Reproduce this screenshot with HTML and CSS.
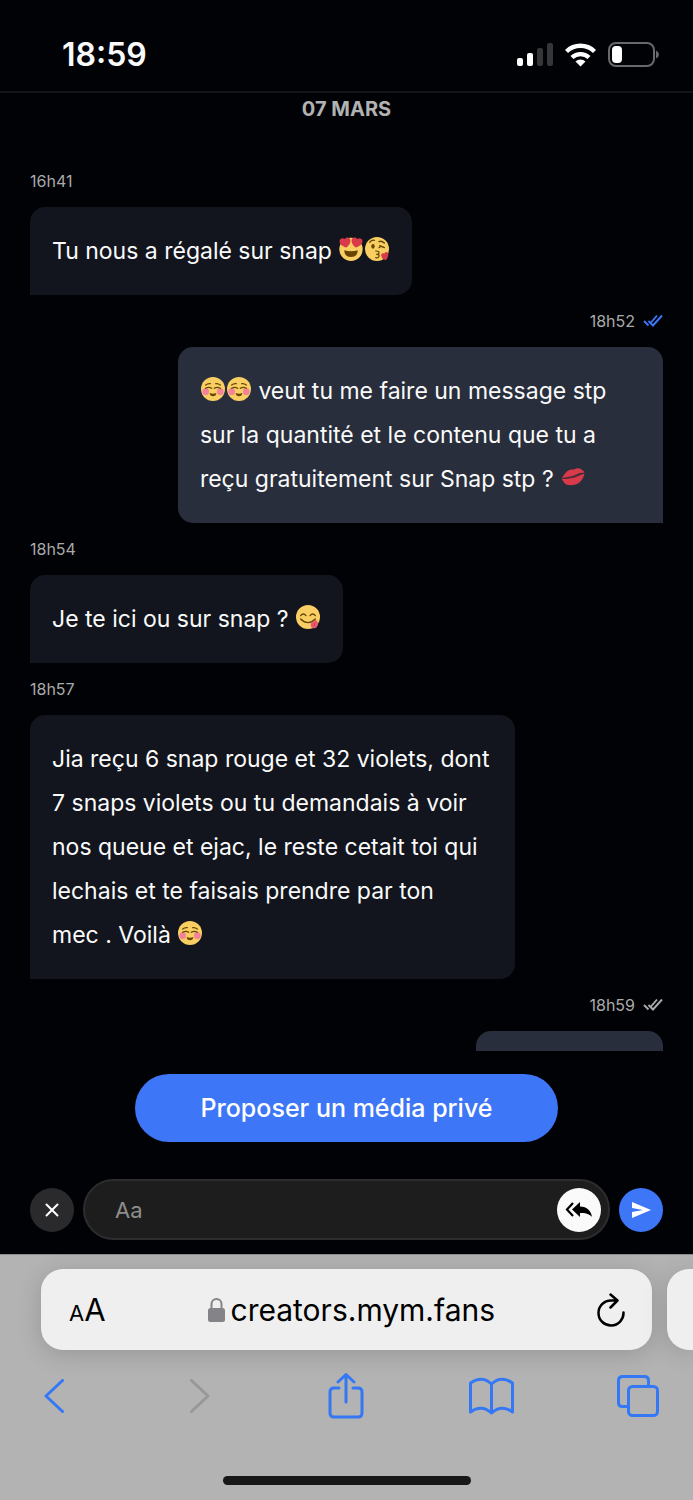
FILE: index.html
```html
<!DOCTYPE html>
<html lang="fr">
<head>
<meta charset="utf-8">
<meta name="viewport" content="width=device-width, initial-scale=1">
<title>Messages</title>
<link rel="stylesheet" href="styles.css">
</head>
<body>
<svg class="sprite" aria-hidden="true">
  <symbol id="checks" viewBox="0 0 20 14"><path d="M1 7l4.500 4.500M5.500 7l4.500 4.500L19 1.500M8 8.500l6-7" fill="none" stroke="currentColor" stroke-width="1.900"/></symbol>
  <symbol id="blush" viewBox="0 0 36 36">
    <circle cx="18" cy="18" r="18" fill="#f9ce62"/>
    <circle cx="7" cy="22" r="5" fill="#f2839a"/><circle cx="29" cy="22" r="5" fill="#f2839a"/>
    <path d="M7 17q4.500-3 9 0M20 17q4.500-3 9 0M7 12q3-2.500 7-2M29 12q-3-2.500-7-2" fill="none" stroke="#664500" stroke-width="1.800" stroke-linecap="round"/>
    <path d="M13 24q5 2.500 10 0-.5 5-5 5t-5-5z" fill="#664500"/>
  </symbol>
  <symbol id="heart-eyes" viewBox="0 0 36 36">
    <circle cx="18" cy="18.500" r="17.500" fill="#f9ce62"/>
    <path d="M8 20q10 3 20 0 0 10-10 10T8 20z" fill="#664500"/>
    <path d="M16.700 3.500C15.200-.2 10.300-.3 8.600 3.100 6 .5 1.100 1.700.8 6c-.3 5.500 6 8.500 10.200 9.800C14.500 13 18.500 8 16.700 3.500z" fill="#d93a49"/>
    <path d="M19.300 3.500C20.800-.2 25.700-.3 27.400 3.100 30 .5 34.900 1.700 35.200 6c.3 5.500-6 8.500-10.200 9.800C21.500 13 17.500 8 19.300 3.500z" fill="#d93a49"/>
  </symbol>
  <symbol id="kiss-face" viewBox="0 0 36 36">
    <circle cx="18" cy="18" r="18" fill="#f9ce62"/>
    <ellipse cx="12" cy="14" rx="2.500" ry="3.500" fill="#664500"/>
    <path d="M7 8q3-4 7-3M21 7q4-2 8 2M21 16q4-4 8 0M22 13l7 3" fill="none" stroke="#664500" stroke-width="2" stroke-linecap="round"/>
    <path d="M16 21q6 0 5 3t-4 2q5 0 4 3t-5 2" fill="none" stroke="#664500" stroke-width="1.800" stroke-linecap="round"/>
    <path d="M35 26c0-4-5-5-6-1-4-2-6 2-4 5 1 3 4 4 6 5 2-2 4-5 4-9z" fill="#d93a49"/>
  </symbol>
  <symbol id="yum" viewBox="0 0 36 36">
    <circle cx="18" cy="18" r="18" fill="#f9ce62"/>
    <path d="M7 16q4-5 8 0M21 16q4-5 8 0M7 21q11 11 22 0" fill="none" stroke="#664500" stroke-width="2" stroke-linecap="round"/>
    <path d="M22 28c1-3 5-3 7-5 2-1 4 1 4 5 0 7-8 9-10 5-1-2-1-3-1-5z" fill="#e75a70"/>
    <path d="M28 27l-1 5" stroke="#c43550" stroke-width="1.200"/>
  </symbol>
  <symbol id="lips" viewBox="0 0 36 36">
    <path d="M1 20c3-4 7-12 13-13 4-1 4 1 7-1 4-2 9-1 11 2 2 1 3 3 3 4-6-1-9 1-14 4-6 3-12 1-20 4z" fill="#d93a49"/>
    <path d="M1 21c5-1 8 0 13-1 8-1 12-5 21-7-1 7-7 16-17 17S6 29 1 21z" fill="#d93a49"/>
    <path d="M5 21c6-5 11-3 16-6 4-2 7-3 10-2-4 3-8 5-13 6-5 1-8 0-13 2z" fill="#542c39"/>
  </symbol>
</svg>

<header class="status">
  <time class="clock">18:59</time>
  <div class="indicators">
    <svg width="36" height="24" viewBox="0 0 36 24" role="img" aria-label="Réseau"><g fill="#fff"><rect y="15" width="6" height="8" rx="2"/><rect x="10" y="10" width="6" height="13" rx="2"/></g><g fill="#363638"><rect x="20" y="5" width="6" height="18" rx="2"/><rect x="30" width="6" height="23" rx="2"/></g></svg>
    <svg width="31" height="24" viewBox="0 0 31 24" role="img" aria-label="Wi-Fi"><g fill="none" stroke="#fff" stroke-width="4.400"><path d="M1.500 8.500a20 20 0 0 1 28 0"/><path d="M7 14.500a12.500 12.500 0 0 1 17 0"/></g><path d="M15.500 23.500l-5-5a7.500 7.500 0 0 1 10 0z" fill="#fff"/></svg>
    <svg width="51" height="25" viewBox="0 0 51 25" role="img" aria-label="Batterie"><rect x="1" y="1" width="45" height="23" rx="7" fill="none" stroke="#69696b" stroke-width="2"/><rect x="4" y="4" width="10" height="17" rx="4" fill="#fff"/><path d="M48 8.500q3 1.500 3 4t-3 4z" fill="#69696b"/></svg>
  </div>
</header>

<main class="chat">
  <section class="thread">
    <h1 class="day">07 MARS</h1>
    <article class="message">
      <div class="meta"><time>16h41</time></div>
      <p class="bubble">Tu nous a régalé sur snap <svg class="emoji" role="img" aria-label="yeux en cœur"><use href="#heart-eyes"/></svg><svg class="emoji" role="img" aria-label="bisou"><use href="#kiss-face"/></svg></p>
    </article>
    <article class="message sent">
      <div class="meta"><time>18h52</time><svg class="checks read" role="img" aria-label="Lu"><use href="#checks"/></svg></div>
      <p class="bubble long"><svg class="emoji" role="img" aria-label="sourire"><use href="#blush"/></svg><svg class="emoji" role="img" aria-label="sourire"><use href="#blush"/></svg> veut tu me faire un message stp<br>sur la quantité et le contenu que tu a<br>reçu gratuitement sur Snap stp ? <svg class="emoji" role="img" aria-label="lèvres"><use href="#lips"/></svg></p>
    </article>
    <article class="message">
      <div class="meta"><time>18h54</time></div>
      <p class="bubble">Je te ici ou sur snap ? <svg class="emoji" role="img" aria-label="miam"><use href="#yum"/></svg></p>
    </article>
    <article class="message">
      <div class="meta"><time>18h57</time></div>
      <p class="bubble long">Jia reçu 6 snap rouge et 32 violets, dont<br>7 snaps violets ou tu demandais à voir<br>nos queue et ejac, le reste cetait toi qui<br>lechais et te faisais prendre par ton<br>mec . Voilà <svg class="emoji" role="img" aria-label="sourire"><use href="#blush"/></svg></p>
    </article>
    <article class="message sent">
      <div class="meta"><time>18h59</time><svg class="checks" role="img" aria-label="Envoyé"><use href="#checks"/></svg></div>
      <p class="bubble short"></p>
    </article>
  </section>

  <button class="propose" type="button">Proposer un média privé</button>

  <form class="composer">
    <button class="round dark" type="button" aria-label="Fermer"><svg width="14" height="14" viewBox="0 0 14 14"><path d="M1.500 1.500l11 11M12.500 1.500l-11 11" stroke="#fff" stroke-width="2" stroke-linecap="round"/></svg></button>
    <div class="field">
      <input class="input" type="text" placeholder="Aa" aria-label="Message">
      <button class="round white" type="button" aria-label="Réponses"><svg width="28" height="18" viewBox="0 0 28 18"><path d="M8 2L2 8.500 8 15" fill="none" stroke="#000" stroke-width="2.200"/><path d="M15 1v4.500c7 .3 11 4 12 10.500-3-3.500-7-4-12-4V16L7 8.500z"/></svg></button>
    </div>
    <button class="round blue" type="submit" aria-label="Envoyer"><svg width="20" height="18" viewBox="0 0 20 18"><path d="M1 1l19 8L1 17v-6l11-2L1 7z" fill="#fff"/></svg></button>
  </form>
</main>

<footer class="browser">
  <div class="tabs">
    <div class="address">
      <button class="plain text-size" type="button" aria-label="Taille du texte"><small>A</small>A</button>
      <a class="url" href="#"><svg width="17" height="25" viewBox="0 0 17 25"><path d="M3.500 12V7a5 5 0 0 1 10 0v5" fill="none" stroke="#838388" stroke-width="2"/><rect y="11" width="17" height="14" rx="2.500" fill="#838388"/></svg>creators.mym.fans</a>
      <button class="plain" type="button" aria-label="Recharger"><svg width="28" height="34" viewBox="0 0 28 34" fill="none" stroke="#000" stroke-width="2.500" stroke-linecap="round" stroke-linejoin="round"><path d="M26.500 19.500A12.500 12.500 0 1 1 14 7.500h6.500M13.500 1.500l7 6-7 7"/></svg></button>
    </div>
    <div class="next-tab"></div>
  </div>
  <nav class="toolbar">
    <button class="plain" type="button" aria-label="Retour"><svg width="20" height="34" viewBox="0 0 20 34"><path d="M18.500 1.500L2 17l16.500 15.500"/></svg></button>
    <button class="plain off" type="button" aria-label="Suivant" disabled><svg width="20" height="34" viewBox="0 0 20 34"><path d="M1.500 1.500L18 17 1.500 32.500"/></svg></button>
    <button class="plain" type="button" aria-label="Partager"><svg width="36" height="46" viewBox="0 0 36 46"><path d="M11 15H6q-4 0-4 4v21q0 4 4 4h24q4 0 4-4V19q0-4-4-4h-5M18 29V2M10 9l8-7.500L26 9"/></svg></button>
    <button class="plain" type="button" aria-label="Signets"><svg width="45" height="38" viewBox="0 0 45 38"><path d="M22.500 7Q13-2 1.500 6v29q11-8 21 1 10-9 21-1V6Q32-2 22.500 7zv29"/></svg></button>
    <button class="plain" type="button" aria-label="Onglets"><svg width="42" height="42" viewBox="0 0 42 42"><rect x="11.500" y="11.500" width="29" height="29" rx="4"/><path d="M31.500 11V5.500q0-4-4-4h-22q-4 0-4 4v22q0 4 4 4H11"/></svg></button>
  </nav>
  <div class="home"></div>
</footer>
</body>
</html>
```

FILE: styles.css
```css
* { box-sizing: border-box; }

body {
  margin: 0;
  height: 100vh;
  display: flex;
  flex-direction: column;
  background: #010206;
  color: #fafafa;
  font-family: Inter, "Open Sans", sans-serif;
  font-size: 23px;
}

.sprite { position: absolute; width: 0; height: 0; }
svg { display: block; flex: none; }
button, input { font: inherit; }
button { border: 0; padding: 0; cursor: pointer; }

.status {
  display: flex;
  justify-content: space-between;
  align-items: center;
  height: 93px;
  padding: 18px 34px 0 62px;
  border-bottom: 2px solid #141518;
}
.clock { font-size: 32px; font-weight: 600; line-height: 40px; }
.indicators { display: flex; align-items: center; gap: 12px; }

.chat { flex: 1; min-height: 0; display: flex; flex-direction: column; }
.thread { flex: 1; min-height: 0; overflow: hidden; padding: 1px 30px 0; }
.day {
  margin: 0 0 31px;
  color: #b2b2b2;
  font-size: 20px;
  font-weight: 700;
  line-height: 30px;
  text-align: center;
}
.message { display: flex; flex-direction: column; align-items: flex-start; }
.meta {
  display: flex;
  align-items: center;
  gap: 8px;
  height: 52px;
  color: #aaa;
  font-size: 16px;
}
.checks { width: 20px; height: 14px; }
.read { color: #3e76f8; }
.bubble {
  margin: 0;
  padding: 22px;
  border-radius: 15px 15px 15px 0;
  background: #12151d;
  line-height: 44px;
  white-space: nowrap;
}
.long { width: 70vw; }
.sent { align-items: flex-end; }
.sent .bubble { border-radius: 15px 15px 0 15px; background: #292e3c; }
.short { width: 27vw; height: 88px; }
.emoji {
  display: inline-block;
  width: 24px;
  height: 24px;
  margin: 0 1px;
  vertical-align: -2px;
}

.propose {
  align-self: center;
  width: 61vw;
  height: 68px;
  margin: 23px 0 37px;
  border-radius: 34px;
  background: #3e76f8;
  color: #fff;
  font-size: 25px;
  font-weight: 500;
}
.composer {
  display: flex;
  align-items: center;
  gap: 9px;
  padding: 0 30px 14px;
}
.round {
  display: grid;
  place-items: center;
  flex: none;
  width: 44px;
  height: 44px;
  border-radius: 50%;
}
.dark { background: #2a2a2c; }
.white { background: #fafafa; }
.blue { background: #3e76f8; }
.field {
  flex: 1;
  min-width: 0;
  display: flex;
  align-items: center;
  height: 61px;
  padding: 0 7px 0 30px;
  border: 2px solid #2d2d2e;
  border-radius: 31px;
  background: #1d1d1d;
}
.input { flex: 1; min-width: 0; padding: 0; border: 0; outline: 0; background: none; color: #fff; font-size: 22px; }
.input::placeholder { color: #8d8d8d; opacity: 1; }

.browser { padding: 14px 0 15px; background: #b3b3b3; border-top: 1px solid #8b8b8b; overflow: hidden; }
.tabs { display: flex; gap: 15px; padding-left: 41px; }
.address, .next-tab {
  height: 81px;
  background: #efefef;
  box-shadow: 0 4px 24px rgba(0, 0, 0, 0.16);
}
.address {
  flex: 1;
  display: flex;
  align-items: center;
  justify-content: space-between;
  padding: 0 27px 0 28px;
  border-radius: 22px;
}
.next-tab { width: 26px; border-radius: 22px 0 0 22px; }
.plain { display: block; background: none; color: #000; }
.text-size { font-size: 31px; }
.text-size small { font-size: 22px; }
.url { display: flex; align-items: center; gap: 6px; color: #000; font-size: 30px; text-decoration: none; }
.toolbar {
  display: flex;
  justify-content: space-between;
  align-items: center;
  height: 92px;
  padding: 0 33px 0 31px;
}
.toolbar .plain { display: grid; place-items: center; width: 45px; }
.toolbar svg { fill: none; stroke: #3478f6; stroke-width: 3; stroke-linecap: round; stroke-linejoin: round; }
.toolbar .off svg { stroke: #989898; }
.home { width: 248px; height: 9px; margin: 34px auto 0; border-radius: 5px; background: #171717; }
```
